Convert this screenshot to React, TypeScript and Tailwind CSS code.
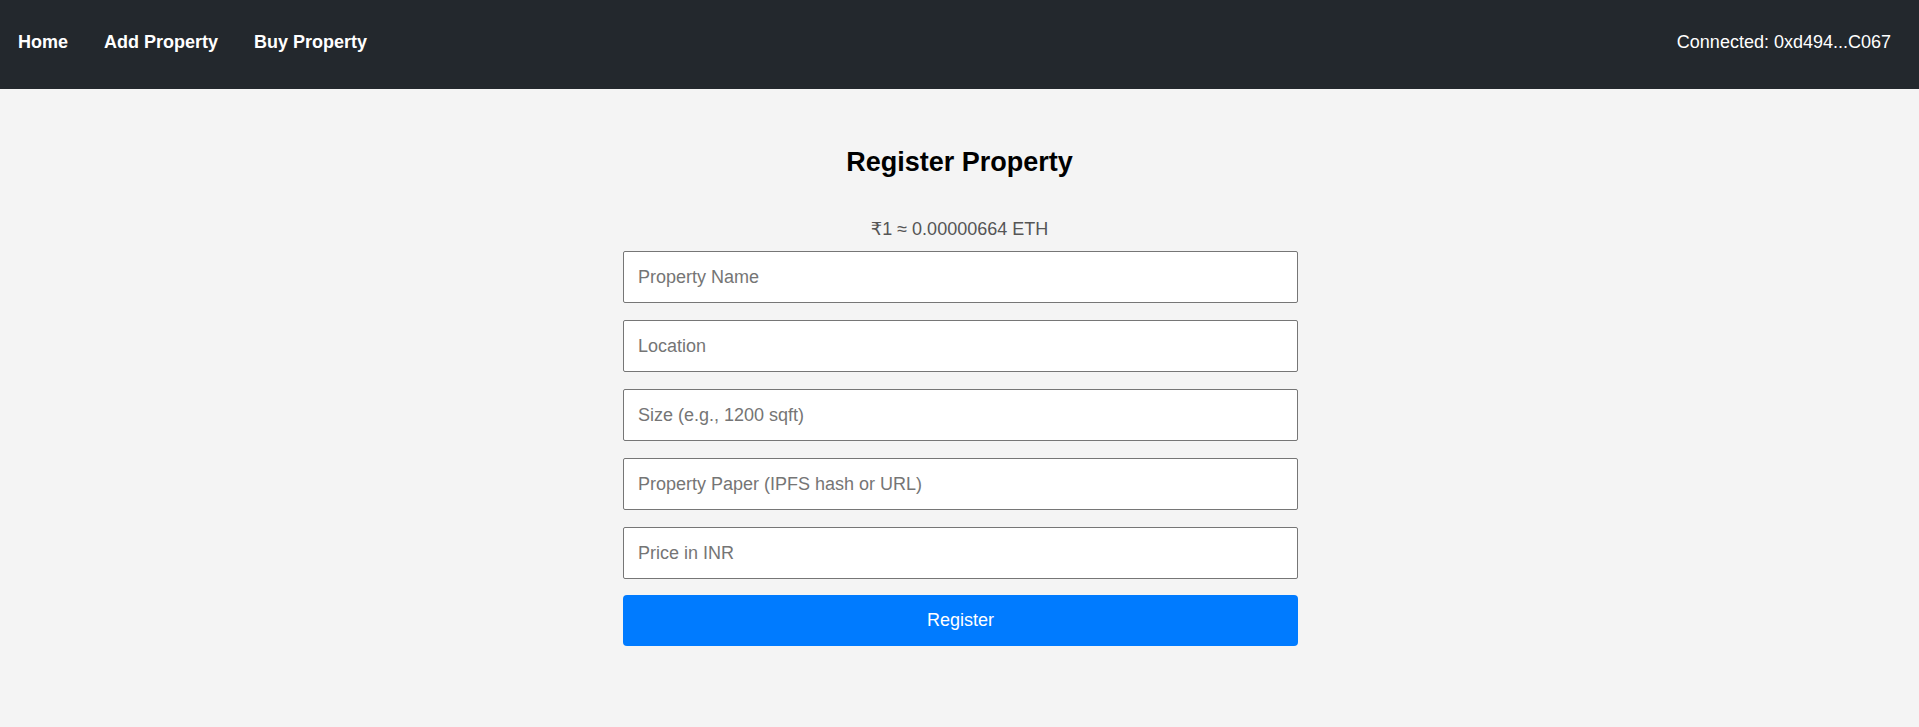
import React from "react";

const fields = [
  "Property Name",
  "Location",
  "Size (e.g., 1200 sqft)",
  "Property Paper (IPFS hash or URL)",
  "Price in INR",
];

export default function App() {
  return (
    <div
      className="min-h-screen bg-[#f4f4f4] text-black"
      style={{ fontFamily: '"Liberation Sans", Arial, "DejaVu Sans", sans-serif' }}
    >
      <nav className="flex h-[89px] items-center justify-between bg-[#23282d] pb-[5px] pl-[18px] pr-[28px] text-[18px] text-white">
        <div className="flex gap-[36px] font-bold">
          <a className="cursor-pointer">Home</a>
          <a className="cursor-pointer">Add Property</a>
          <a className="cursor-pointer">Buy Property</a>
        </div>
        <div>Connected: 0xd494...C067</div>
      </nav>
      <main className="flex flex-col items-center pt-[58px]">
        <h2 className="text-[27px] font-bold leading-[31px]">Register Property</h2>
        <p className="mt-[41px] text-[18px] leading-[21px] text-[#555555]">
          ₹1 ≈ 0.00000664 ETH
        </p>
        <form className="ml-[2px] mt-[11px] flex w-[675px] flex-col gap-[17px]" onSubmit={(e) => e.preventDefault()}>
          {fields.map((f) => (
            <input
              key={f}
              placeholder={f}
              className="h-[52px] w-full rounded-[2px] border border-[#767676] bg-white px-[14px] text-[18px] text-black outline-none placeholder:text-[#757575]"
            />
          ))}
          <button
            type="submit"
            className="-mt-px h-[51px] w-full rounded-[4px] bg-[#007bff] text-[18px] text-white"
          >
            Register
          </button>
        </form>
      </main>
    </div>
  );
}
